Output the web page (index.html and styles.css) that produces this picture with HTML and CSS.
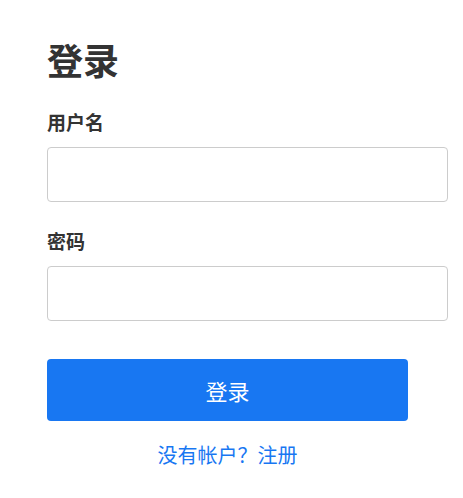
FILE: index.html
```html
<!DOCTYPE html>
<html lang="zh-CN">
<head>
  <meta charset="UTF-8">
  <meta name="viewport" content="width=device-width, initial-scale=1.0">
  <title>登录</title>
  <link rel="stylesheet" href="styles.css">
</head>
<body>
  <div class="login">
    <h1>登录</h1>
    <form class="login-form" onsubmit="return false;">
      <div class="field">
        <label for="username">用户名</label>
        <input type="text" id="username">
      </div>
      <div class="field">
        <label for="password">密码</label>
        <input type="password" id="password">
      </div>
      <button type="submit">登录</button>
    </form>
    <p class="register"><a href="#">没有帐户？注册</a></p>
  </div>
</body>
</html>
```

FILE: styles.css
```css
body {
  margin: 0;
  background-color: #fff;
  color: #333;
  font-family: "Noto Sans CJK SC", "Noto Sans", sans-serif;
}
.login {
  width: 361px;
  padding: 35px 0 0 47px;
}
.login h1 {
  font-size: 36px;
  line-height: 48px;
  margin: 0 0 27px;
}
.field {
  margin-bottom: 27px;
}
.field label {
  display: block;
  font-size: 19px;
  font-weight: bold;
  line-height: 24px;
  margin-bottom: 13px;
}
.field input {
  width: 100%;
  height: 53px;
  padding: 0 19px;
  border: 1px solid #ccc;
  border-radius: 4px;
  font-size: 16px;
  box-sizing: content-box;
  display: block;
}
.login-form button {
  display: block;
  width: 100%;
  height: 62px;
  margin-top: 38px;
  border: none;
  border-radius: 4px;
  background-color: #1877f2;
  color: #fff;
  font-family: inherit;
  font-size: 22px;
  cursor: pointer;
}
.register {
  text-align: center;
  margin: 20px 0 0;
  font-size: 20px;
  line-height: 28px;
}
.register a {
  color: #1877f2;
  text-decoration: none;
}
```
